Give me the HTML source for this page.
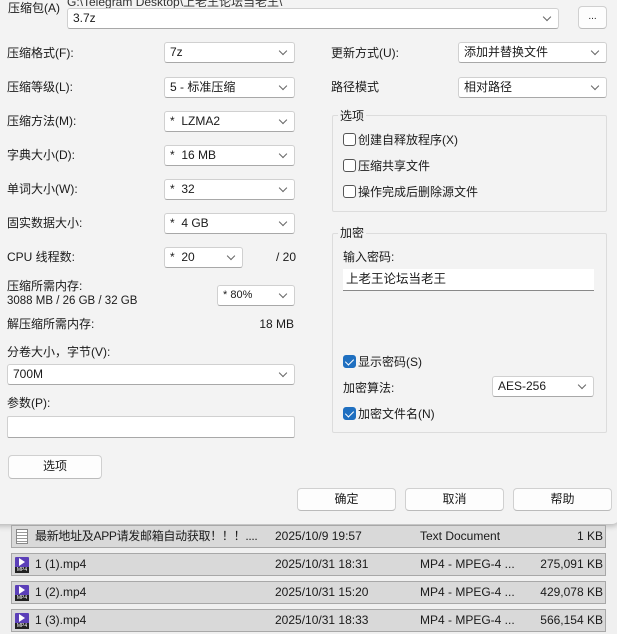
<!DOCTYPE html><html><head><meta charset="utf-8"><style>
*{box-sizing:border-box;margin:0;padding:0}
body{width:617px;height:634px;overflow:hidden;background:#f0f0f0;font-family:"Liberation Sans","Noto Sans CJK SC",sans-serif;font-size:12px;color:#1a1a1a;position:relative}
.a{position:absolute;white-space:nowrap;line-height:14px}
.dlg{position:absolute;left:-10px;top:-10px;width:630px;height:534px;background:#f3f3f3;border-radius:0 0 8px 8px;box-shadow:0 2px 6px rgba(0,0,0,.25)}
.cb{position:absolute;background:#fff;border:1px solid #d0d0d0;border-bottom-color:#a8a8a8;border-radius:3px;padding-left:5px;line-height:18px;font-size:12px}
.cb:after{content:"";position:absolute;right:8px;top:5px;width:5px;height:5px;border-right:1px solid #666;border-bottom:1px solid #666;transform:rotate(45deg)}
.cb.nod:after{display:none}
.btn{position:absolute;background:#fdfdfd;border:1px solid #d0d0d0;border-bottom-color:#bbb;border-radius:4px;text-align:center;line-height:21px}
.grp{position:absolute;border:1px solid #dcdcdc;border-radius:2px}
.gt{position:absolute;background:#f3f3f3;padding:0 2px;line-height:14px}
.ck{position:absolute;width:13px;height:13px;border:1px solid #555;border-radius:3px;background:#fff}
.ck.on{background:#1f6fc0;border-color:#1f6fc0}
.ck.on:after{content:"";position:absolute;left:3px;top:1px;width:4px;height:7px;border-right:1.5px solid #fff;border-bottom:1.5px solid #fff;transform:rotate(45deg)}
.row{position:absolute;left:11px;width:595px;height:23px;background:#d9d9d9;border:1px solid #a8a8a8;line-height:21px;font-size:12px}
.row span{position:absolute}
.mp{position:absolute;left:3px;top:3px;width:14px;height:16px;background:#5b3fb8;border-radius:1px}
.mp:before{content:"";position:absolute;left:4px;top:1px;border-left:6px solid #fff;border-top:4px solid transparent;border-bottom:4px solid transparent}
.mp:after{content:"MP4";position:absolute;left:0;bottom:0;width:14px;background:#222;color:#fff;font-size:5px;line-height:6px;text-align:center}
.tx{position:absolute;left:4px;top:3px;width:12px;height:15px;border:1px solid #888;background:repeating-linear-gradient(#fff 0 2px,#999 2px 3px)}
</style></head><body>
<div class="dlg"></div>
<div class="a" style="left:8px;top:1px">压缩包(A)</div>
<div class="a" style="left:67px;top:-5px;color:#333">G:\Telegram Desktop\上老王论坛当老王\</div>
<div class="cb" style="left:67px;top:8px;width:492px;height:21px">3.7z</div>
<div class="btn" style="left:578px;top:6px;width:29px;height:23px;line-height:20px;font-size:10px">...</div>

<div class="a" style="left:7px;top:46px">压缩格式(F):</div><div class="cb" style="left:164px;top:42px;width:131px;height:21px">7z</div>
<div class="a" style="left:7px;top:80px">压缩等级(L):</div><div class="cb" style="left:164px;top:77px;width:131px;height:21px">5 - 标准压缩</div>
<div class="a" style="left:7px;top:114px">压缩方法(M):</div><div class="cb" style="left:164px;top:111px;width:131px;height:21px">*&nbsp; LZMA2</div>
<div class="a" style="left:7px;top:148px">字典大小(D):</div><div class="cb" style="left:164px;top:145px;width:131px;height:21px">*&nbsp; 16 MB</div>
<div class="a" style="left:7px;top:182px">单词大小(W):</div><div class="cb" style="left:164px;top:179px;width:131px;height:21px">*&nbsp; 32</div>
<div class="a" style="left:7px;top:216px">固实数据大小:</div><div class="cb" style="left:164px;top:213px;width:131px;height:21px">*&nbsp; 4 GB</div>
<div class="a" style="left:7px;top:250px">CPU 线程数:</div><div class="cb" style="left:164px;top:247px;width:79px;height:21px">*&nbsp; 20</div>
<div class="a" style="left:276px;top:250px">/ 20</div>
<div class="a" style="left:7px;top:279px">压缩所需内存:</div>
<div class="a" style="left:7px;top:294px;font-size:11.5px">3088 MB / 26 GB / 32 GB</div>
<div class="cb" style="left:217px;top:285px;width:78px;height:21px;font-size:11px">* 80%</div>
<div class="a" style="left:7px;top:317px">解压缩所需内存:</div>
<div class="a" style="right:323px;top:317px">18 MB</div>
<div class="a" style="left:7px;top:345px">分卷大小，字节(V):</div>
<div class="cb" style="left:7px;top:364px;width:288px;height:21px">700M</div>
<div class="a" style="left:7px;top:396px">参数(P):</div>
<div class="cb nod" style="left:7px;top:416px;width:288px;height:22px;border-radius:2px"></div>
<div class="btn" style="left:8px;top:455px;width:94px;height:24px">选项</div>

<div class="a" style="left:331px;top:46px">更新方式(U):</div><div class="cb" style="left:458px;top:42px;width:149px;height:21px">添加并替换文件</div>
<div class="a" style="left:331px;top:80px">路径模式</div><div class="cb" style="left:458px;top:77px;width:149px;height:21px">相对路径</div>

<div class="grp" style="left:332px;top:115px;width:275px;height:97px"></div>
<div class="gt" style="left:338px;top:109px">选项</div>
<div class="ck" style="left:343px;top:133px"></div><div class="a" style="left:358px;top:133px">创建自释放程序(X)</div>
<div class="ck" style="left:343px;top:159px"></div><div class="a" style="left:358px;top:159px">压缩共享文件</div>
<div class="ck" style="left:343px;top:185px"></div><div class="a" style="left:358px;top:185px">操作完成后删除源文件</div>

<div class="grp" style="left:332px;top:233px;width:275px;height:200px"></div>
<div class="gt" style="left:338px;top:226px">加密</div>
<div class="a" style="left:343px;top:250px">输入密码:</div>
<div style="position:absolute;left:343px;top:269px;width:251px;height:22px;background:#fff;border-bottom:1px solid #888;padding-left:3px;line-height:20px;font-size:12.5px">上老王论坛当老王</div>
<div class="ck on" style="left:343px;top:355px"></div><div class="a" style="left:358px;top:355px">显示密码(S)</div>
<div class="a" style="left:343px;top:381px">加密算法:</div><div class="cb" style="left:492px;top:376px;width:102px;height:21px">AES-256</div>
<div class="ck on" style="left:343px;top:407px"></div><div class="a" style="left:358px;top:407px">加密文件名(N)</div>

<div class="btn" style="left:297px;top:488px;width:99px;height:23px">确定</div>
<div class="btn" style="left:405px;top:488px;width:99px;height:23px">取消</div>
<div class="btn" style="left:513px;top:488px;width:99px;height:23px">帮助</div>

<div class="row" style="top:525px"><div class="tx"></div><span style="left:23px;letter-spacing:-0.3px">最新地址及APP请发邮箱自动获取！！！....</span><span style="left:263px">2025/10/9 19:57</span><span style="left:408px">Text Document</span><span style="right:2px">1 KB</span></div>
<div class="row" style="top:553px"><div class="mp"></div><span style="left:23px">1 (1).mp4</span><span style="left:263px">2025/10/31 18:31</span><span style="left:408px">MP4 - MPEG-4 ...</span><span style="right:2px">275,091 KB</span></div>
<div class="row" style="top:581px"><div class="mp"></div><span style="left:23px">1 (2).mp4</span><span style="left:263px">2025/10/31 15:20</span><span style="left:408px">MP4 - MPEG-4 ...</span><span style="right:2px">429,078 KB</span></div>
<div class="row" style="top:609px"><div class="mp"></div><span style="left:23px">1 (3).mp4</span><span style="left:263px">2025/10/31 18:33</span><span style="left:408px">MP4 - MPEG-4 ...</span><span style="right:2px">566,154 KB</span></div>
</body></html>
